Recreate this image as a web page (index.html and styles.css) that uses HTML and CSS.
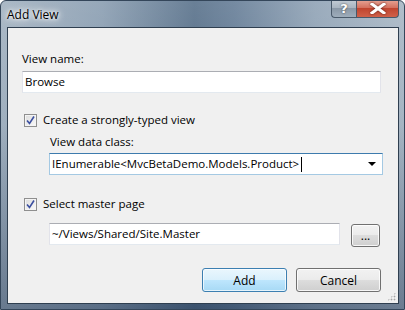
FILE: index.html
```html
<!DOCTYPE html>
<html>
<head>
<meta charset="utf-8">
<title>Add View</title>
<link rel="stylesheet" href="styles.css">
</head>
<body>
<div class="window">
    <div class="titlebar">
        <span class="title">Add View</span>
        <div class="caption">
            <span class="cap-help">?</span>
            <span class="cap-close">
                <svg width="16" height="11" viewBox="0 0 16 11"><path d="M2 1 L14 10 M14 1 L2 10" stroke="#fff" stroke-width="3" stroke-linecap="square"/></svg>
            </span>
        </div>
    </div>
    <div class="client">
        <div class="label">View name:</div>
        <div class="textbox name-box">Browse</div>

        <div class="check-row first-check">
            <span class="checkbox"><svg width="9" height="9" viewBox="0 0 9 9"><path d="M1 4.5 L3.5 7.5 L8 0.5" fill="none" stroke="#3b4fa0" stroke-width="1.6"/></svg></span>
            <span>Create a strongly-typed view</span>
        </div>
        <div class="indent">
            <div class="label sub-label">View data class:</div>
            <div class="combo">
                <span class="combo-text">IEnumerable&lt;MvcBetaDemo.Models.Product&gt;</span><span class="caret"></span>
                <span class="combo-arrow"></span>
            </div>
        </div>

        <div class="check-row second-check">
            <span class="checkbox"><svg width="9" height="9" viewBox="0 0 9 9"><path d="M1 4.5 L3.5 7.5 L8 0.5" fill="none" stroke="#3b4fa0" stroke-width="1.6"/></svg></span>
            <span>Select master page</span>
        </div>
        <div class="indent master-row">
            <div class="textbox master-box">~/Views/Shared/Site.Master</div>
            <button class="btn browse-btn">...</button>
        </div>

        <div class="actions">
            <button class="btn btn-default">Add</button>
            <button class="btn">Cancel</button>
        </div>
        <div class="grip"></div>
    </div>
</div>
</body>
</html>
```

FILE: styles.css
```css
body {
    margin: 0;
    padding: 0;
    font-family: "Open Sans", "Noto Sans", sans-serif;
    font-size: 11.5px;
    color: #000;
}
.window {
    width: 405px;
    height: 310px;
    box-sizing: border-box;
    border: 1px solid #34465a;
    border-radius: 6px 6px 0 0;
    background:
        linear-gradient(to bottom, rgba(255,255,255,0.12), rgba(0,0,0,0) 40%, rgba(20,40,70,0.4) 100%),
        linear-gradient(to right, #a0b0bf 0%, #889cb0 25%, #556e88 48%, #637b95 58%, #8ea1b4 78%, #a6b5c3 100%);
    position: relative;
    overflow: hidden;
}
.titlebar {
    height: 26px;
    display: flex;
    align-items: flex-start;
    justify-content: space-between;
}
.title {
    margin: 5px 0 0 6px;
    font-size: 12px;
    text-shadow: 0 0 6px #fff, 0 0 10px #fff, 0 0 3px rgba(255,255,255,0.9);
}
.caption {
    display: flex;
    margin-right: 5px;
    margin-top: -1px;
}
.cap-help, .cap-close {
    height: 18px;
    box-sizing: border-box;
    border: 1px solid #49596a;
    border-top: none;
    display: flex;
    align-items: center;
    justify-content: center;
}
.cap-help {
    width: 25px;
    border-radius: 0 0 0 4px;
    border-right: none;
    background: linear-gradient(to bottom, #c3ccd5 0%, #a9b5c1 45%, #8a98a7 50%, #9eadbb 100%);
    color: #fff;
    font-family: "DejaVu Sans", sans-serif;
    font-weight: bold;
    font-size: 13px;
    text-shadow: 0 0 2px #333;
}
.cap-close {
    width: 43px;
    border-radius: 0 0 4px 0;
    background: linear-gradient(to bottom, #e7a596 0%, #d4715f 45%, #c0452f 50%, #d0614a 100%);
}
.cap-close svg {
    filter: drop-shadow(0 0 1px #5a1a10);
}
.client {
    margin-left: 6px;
    width: 392px;
    height: 277px;
    box-sizing: border-box;
    border: 1px solid #2f3f50;
    background: #f0f0f0;
    padding: 23px 17px 0 14px;
    position: relative;
}
.label {
    line-height: 16px;
}
.textbox, .combo {
    box-sizing: border-box;
    height: 22px;
    background: #fff;
    border: 1px solid #e2e3ea;
    border-top-color: #abadb3;
    border-bottom-color: #e3e9ef;
    line-height: 20px;
    padding-left: 2px;
}
.name-box {
    margin-top: 4px;
    width: 359px;
}
.check-row {
    display: flex;
    align-items: center;
    height: 16px;
    line-height: 16px;
    padding-left: 2px;
}
.first-check {
    margin-top: 19px;
}
.checkbox {
    width: 13px;
    height: 13px;
    box-sizing: border-box;
    border: 1px solid #8f8f8f;
    background: linear-gradient(135deg, #dcdcdc, #fafafa);
    box-shadow: inset 0 0 0 1px #f4f4f4;
    display: flex;
    align-items: center;
    justify-content: center;
    margin-right: 6px;
}
.indent {
    padding-left: 27px;
}
.sub-label {
    margin-top: 6px;
    padding-left: 1px;
}
.combo {
    margin-top: 3px;
    width: 334px;
    border-color: #a4c9e3;
    border-top-color: #3d7bad;
    display: flex;
    align-items: center;
    position: relative;
}
.combo-text {
    line-height: 20px;
}
.caret {
    width: 1px;
    height: 15px;
    background: #000;
    margin-left: 2px;
}
.combo-arrow {
    position: absolute;
    right: 6px;
    top: 8px;
    width: 0;
    height: 0;
    border-left: 4px solid transparent;
    border-right: 4px solid transparent;
    border-top: 4px solid #000;
}
.second-check {
    margin-top: 21px;
}
.master-row {
    display: flex;
    align-items: flex-start;
    margin-top: 11px;
}
.master-box {
    width: 291px;
}
.btn {
    font-family: inherit;
    font-size: 12px;
    color: #000;
    box-sizing: border-box;
    border: 1px solid #707070;
    border-radius: 3px;
    background: linear-gradient(to bottom, #f2f2f2 0%, #ebebeb 50%, #dddddd 50%, #cfcfcf 100%);
    box-shadow: inset 0 0 0 1px rgba(255,255,255,0.8);
    padding: 0;
    margin: 0;
}
.browse-btn {
    margin-left: 11px;
    margin-top: 1px;
    width: 29px;
    height: 23px;
    line-height: 14px;
}
.actions {
    display: flex;
    justify-content: flex-end;
    gap: 9px;
    margin-top: 21px;
}
.actions .btn {
    width: 85px;
    height: 24px;
}
.btn-default {
    border-color: #3c7fb1;
    background: linear-gradient(to bottom, #eaf6fd 0%, #d9f0fc 50%, #bee6fd 50%, #a7d9f5 100%);
    box-shadow: inset 0 0 0 1px rgba(255,255,255,0.7);
}
.grip {
    position: absolute;
    right: 2px;
    bottom: 2px;
    width: 9px;
    height: 9px;
    background-image: radial-gradient(circle, #a5a5a5 0.8px, transparent 1.1px);
    background-size: 3px 3px;
    clip-path: polygon(100% 0, 100% 100%, 0 100%);
}
```
